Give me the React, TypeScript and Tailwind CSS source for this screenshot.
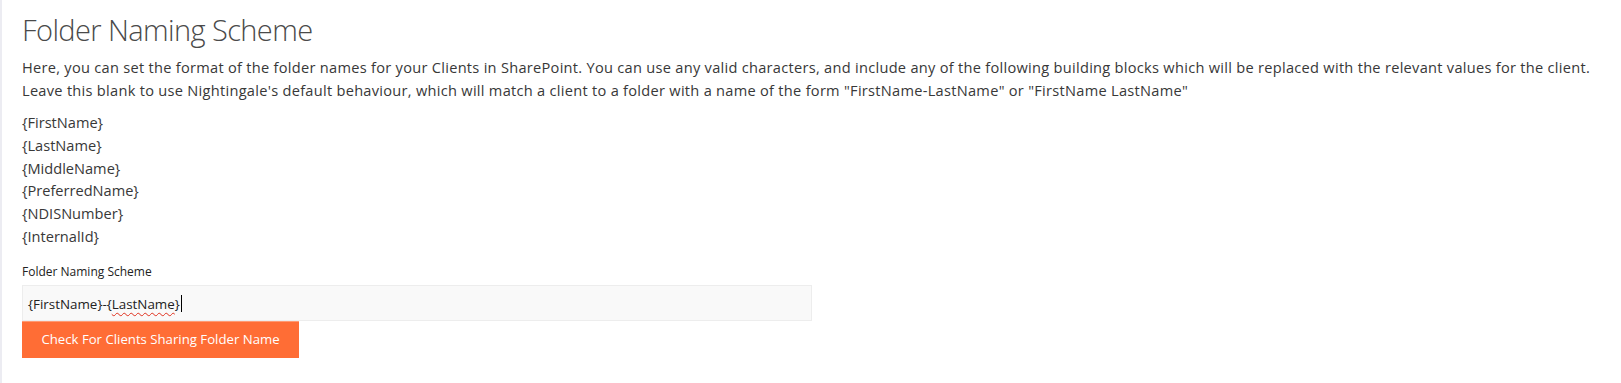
const blocks = [
  "{FirstName}",
  "{LastName}",
  "{MiddleName}",
  "{PreferredName}",
  "{NDISNumber}",
  "{InternalId}",
];

const App: React.FC = () => {
  return (
    <div
      className="min-h-[383px] bg-white border-l-2 border-[#ececf2] pl-5 pr-5 pt-[11px] text-[#333]"
      style={{ fontFamily: '"Open Sans", "Noto Sans", sans-serif' }}
    >
      {/* Heading */}
      <h1 className="text-[29px] font-light leading-[38px] tracking-[-0.6px] text-[#4a4a4a]">
        Folder Naming Scheme
      </h1>
      <p className="mt-[7px] text-[14.6px] leading-[22.5px] tracking-[0.28px] text-[#383838]">
        Here, you can set the format of the folder names for your Clients in SharePoint. You can use any valid
        characters, and include any of the following building blocks which will be replaced with the relevant values
        for the client. Leave this blank to use Nightingale's default behaviour, which will match a client to a folder
        with a name of the form "FirstName-LastName" or "FirstName LastName"
      </p>

      {/* Building blocks */}
      <div className="mt-[10px] flex flex-col text-[14.6px] leading-[22.8px] text-[#383838]">
        {blocks.map((b) => (
          <span key={b}>{b}</span>
        ))}
      </div>

      {/* Form */}
      <label className="mt-[15px] block text-[12px] leading-[18px] text-[#222]">Folder Naming Scheme</label>
      <div
        role="textbox"
        className="mt-[4px] flex h-[36px] w-[790px] items-center border border-[#ededed] bg-[#f9f9f9] pl-[5px] pt-[2px] text-[13.4px] text-[#222]"
      >
        <span>{"{FirstName}-{"}</span>
        <span className="underline decoration-wavy decoration-[#e0301e] decoration-1 underline-offset-[3px]">
          LastName
        </span>
        <span>{"}"}</span>
        <span className="ml-px inline-block h-[17px] w-px bg-black" />
      </div>
      <button className="block h-[37px] w-[277px] border-t border-[#ff9a72] bg-[#ff6d35] text-[13.2px] text-white">
        Check For Clients Sharing Folder Name
      </button>
    </div>
  );
};

export default App;
